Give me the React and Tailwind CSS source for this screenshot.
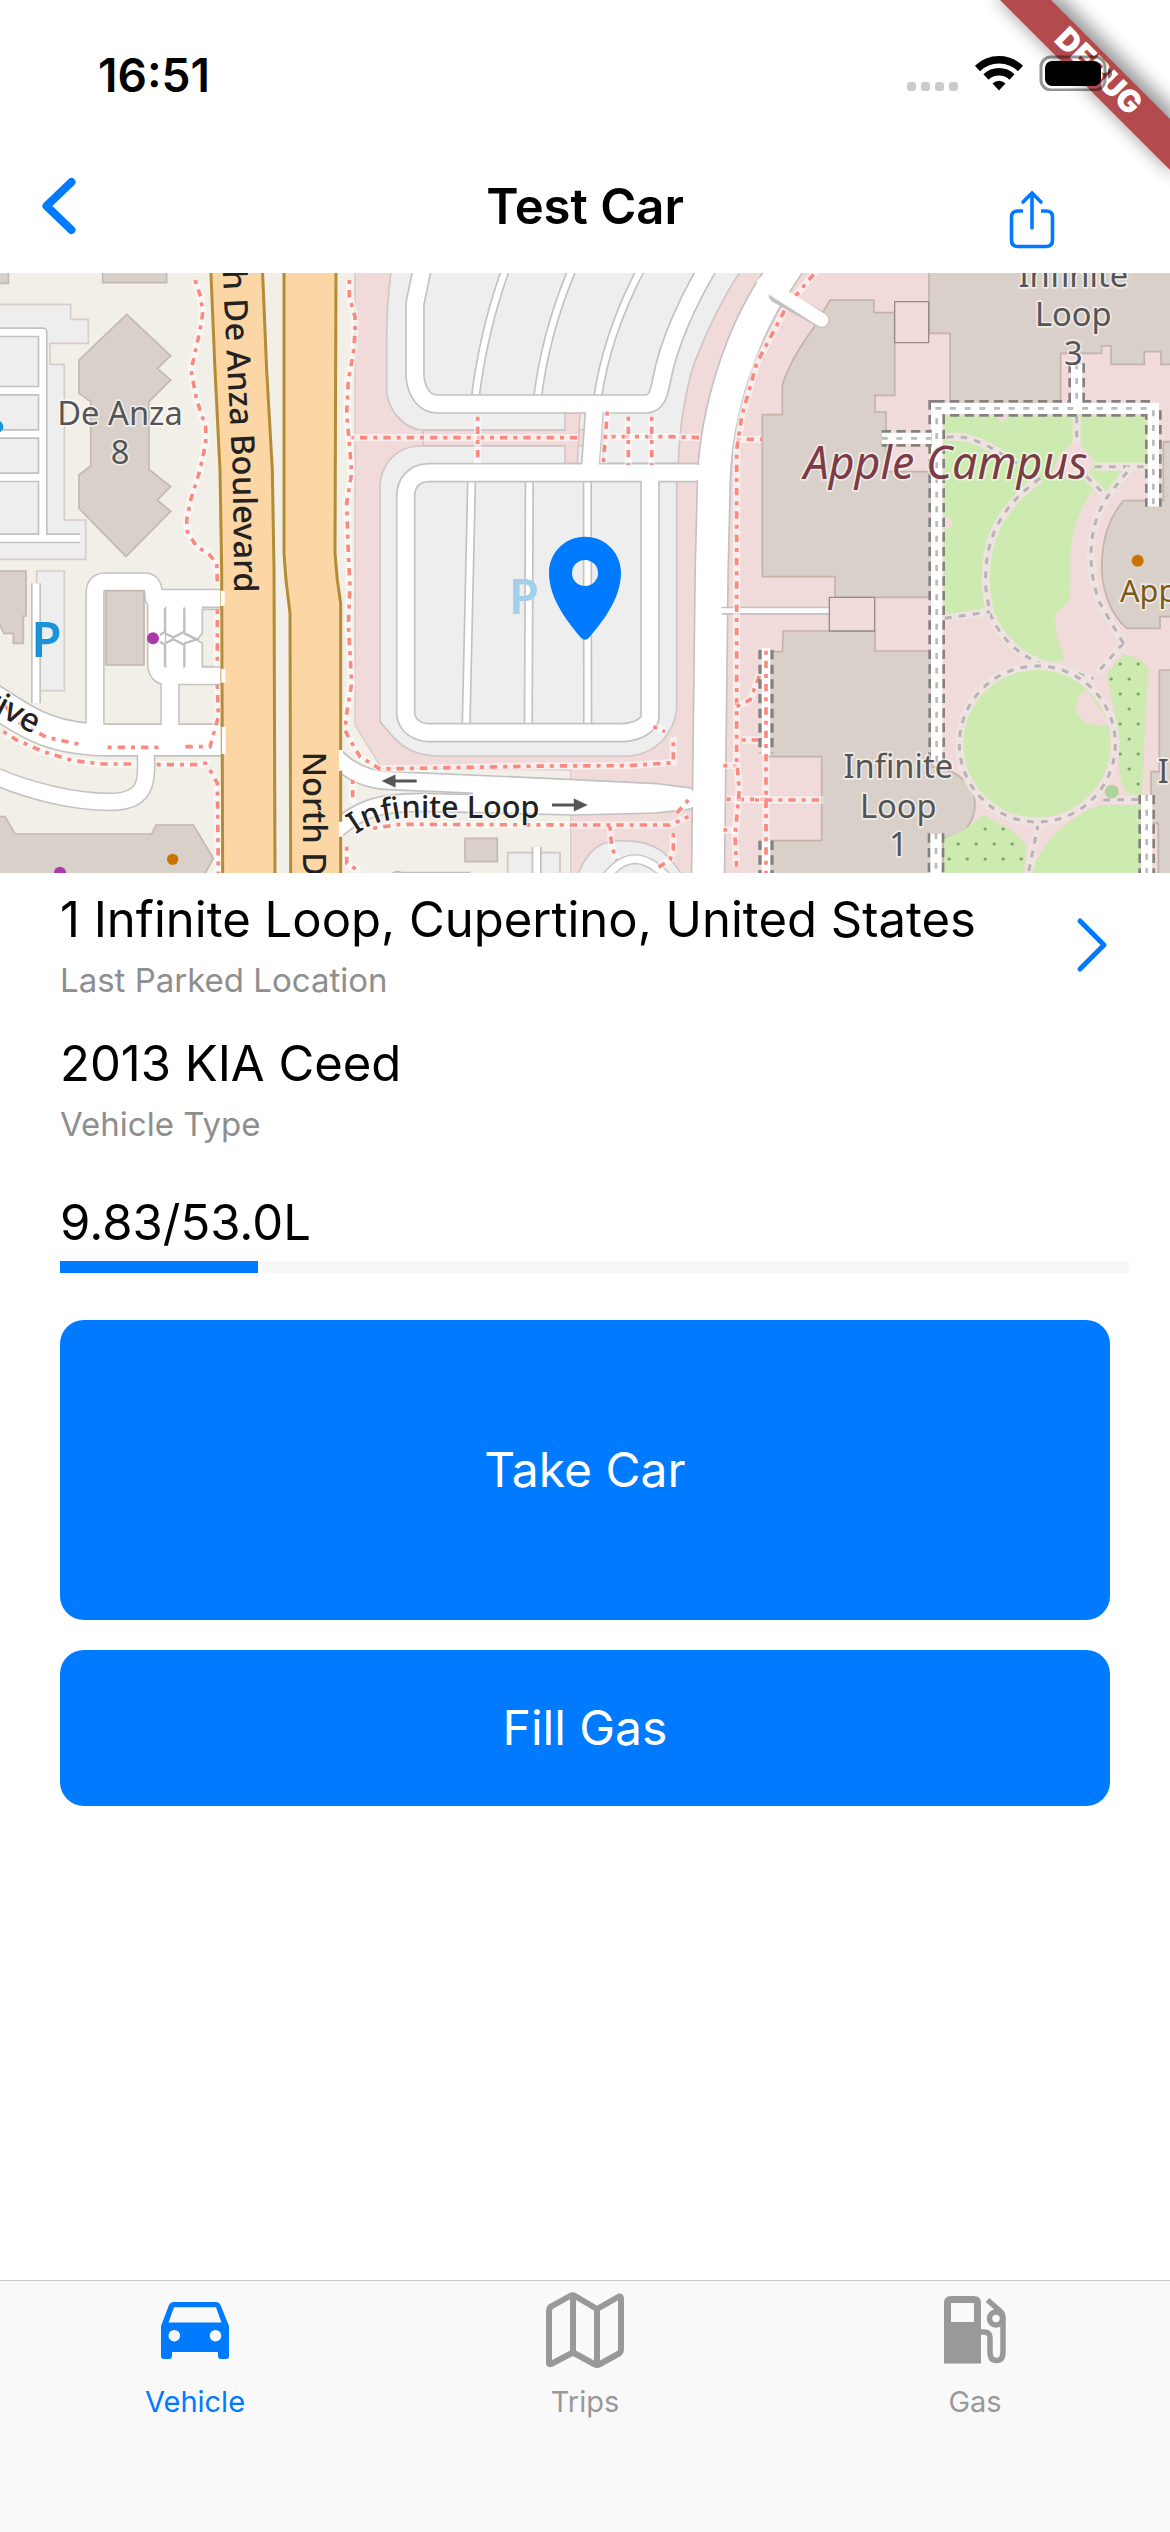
import React from "react";

const FUEL = 9.83;
const TANK = 53;

function DebugBanner() {
  return (
    <svg
      className="pointer-events-none absolute top-0 right-0 h-[220px] w-[220px]"
      viewBox="0 0 220 220"
      aria-hidden="true"
    >
      <defs>
        <filter id="bannerShadow" x="-20%" y="-20%" width="140%" height="140%">
          <feGaussianBlur stdDeviation="9" />
        </filter>
      </defs>
      <path
        d="M44 -6L226 176V112L108 -6Z"
        fill="#000"
        opacity="0.4"
        filter="url(#bannerShadow)"
      />
      <path d="M50 0L220 170V119L101 0Z" fill="#b34a4e" />
      <text
        transform="translate(149 71) rotate(45)"
        y="11"
        textAnchor="middle"
        fill="#fff"
        fontFamily="Inter, sans-serif"
        fontSize="31"
        fontWeight="900"
      >
        DEBUG
      </text>
    </svg>
  );
}

function StatusBar() {
  return (
    <div className="relative z-10 flex h-[141px] items-start justify-between pt-[45px] pr-[58px] pl-[98px]">
      <span className="text-[46px] leading-[60px] font-semibold">16:51</span>
      <svg className="mt-[10px] h-9 w-[206px]" viewBox="0 0 206 36" aria-hidden="true">
        <g fill="#cbcbcb">
          <rect x="1" y="27" width="9" height="9" rx="3" />
          <rect x="15" y="27" width="9" height="9" rx="3" />
          <rect x="29" y="27" width="9" height="9" rx="3" />
          <rect x="43" y="27" width="9" height="9" rx="3" />
        </g>
        <g fill="none" stroke="#000" strokeWidth="7.5">
          <path d="M71.500 13.500A31 31 0 0 1 114.500 13.500" />
          <path d="M80 22A19 19 0 0 1 106 22" />
        </g>
        <path d="M86.500 28.500Q93 23 99.500 28.500L93 35.500Z" />
        <rect x="135" y="2" width="64" height="33" rx="10" fill="none" stroke="#000" strokeOpacity="0.42" strokeWidth="3" />
        <rect x="139" y="6" width="56" height="25" rx="7" />
        <path d="M202 13Q206 15 206 18.500T202 24Z" opacity="0.5" />
      </svg>
    </div>
  );
}

function NavBar() {
  return (
    <header className="grid h-[132px] grid-cols-3 items-start">
      <button type="button" aria-label="Back" className="mt-9 ml-[41px] w-9 text-[#007aff]">
        <svg className="h-[58px] w-9" viewBox="0 0 36 58" aria-hidden="true">
          <path d="M30.500 5L5.500 29L30.500 53" fill="none" stroke="currentColor" strokeWidth="8" strokeLinecap="round" strokeLinejoin="round" />
        </svg>
      </button>
      <h1 className="mt-9 text-center text-[49px] leading-[60px] font-semibold">Test Car</h1>
      <button type="button" aria-label="Share" className="mt-[49px] mr-[114px] justify-self-end text-[#007aff]">
        <svg className="h-[60px] w-12" viewBox="0 0 48 60" fill="none" stroke="currentColor" strokeWidth="3.600" strokeLinecap="round" aria-hidden="true">
          <path d="M15 21H10Q3.500 21 3.500 27V50Q3.500 56.500 10 56.500H38Q44.500 56.500 44.500 50V27Q44.500 21 38 21H33" strokeLinecap="butt" />
          <path d="M24 4V38M15 12L24 3L33 12" />
        </svg>
      </button>
    </header>
  );
}

// Footpath in the red dotted style of the street map
function Footpath({ d }) {
  return (
    <>
      <path d={d} fill="none" stroke="#fff" strokeOpacity="0.5" strokeWidth="22" />
      <path d={d} fill="none" stroke="#fa8a80" strokeWidth="11" strokeDasharray="12 18 22 18" />
    </>
  );
}

function Walkway({ d }) {
  return (
    <>
      <path d={d} fill="none" stroke="#efe3e1" strokeWidth="24" />
      <path d={d} fill="none" stroke="#b8b3b4" strokeWidth="9" strokeDasharray="20 22" />
    </>
  );
}

function Corridor({ d }) {
  return (
    <>
      <path d={d} fill="none" stroke="#85817f" strokeWidth="50" strokeDasharray="28 16" />
      <path d={d} fill="none" stroke="#fff" strokeWidth="34" />
      <path d={d} fill="none" stroke="#bbb" strokeWidth="8" strokeDasharray="18 26" />
    </>
  );
}

function Roads({ paths, width, casing = 5 }) {
  return (
    <g fill="none" strokeLinecap="butt" strokeLinejoin="round">
      {paths.map((d) => (
        <path key={d} d={d} stroke="#c4c2c1" strokeWidth={width + casing * 2} />
      ))}
      {paths.map((d) => (
        <path key={d} d={d} stroke="#fff" strokeWidth={width} />
      ))}
    </g>
  );
}

function WestBlocks() {
  return (
    <g>
      <g fill="#d9d0c9" stroke="#c4b8b0" strokeWidth="5">
        <path d="M-10 -10H25V40H-10Z" />
        <path d="M308 -10H500V38H308Z" />
        <path d="M380 133L512 257L472 295L512 330L447 395V598L512 650L472 690L512 724L378 860L237 715V615L272 588V395L237 370V270Z" />
        <path d="M-10 903H78V1038H70V1120H40V1090H12L0 1065H-10Z" />
        <path d="M-10 1640H15L45 1692H455L468 1665H580L640 1765L610 1820H-10Z" />
      </g>
      <g fill="#eeeeee" stroke="#d8cccb" strokeWidth="5">
        <path d="M-10 103H212V148H265V220H150V283H193V750H257V868H-10Z" />
        <path d="M110 903H193V1262H110Z" />
      </g>
      <Roads
        width={20}
        paths={["M-10 187H128V805", "M-10 362H128", "M-10 492H128", "M-10 622H128", "M-10 805H240", "M108 940V1300"]}
      />
      <g fill="none" strokeLinejoin="round">
        <g stroke="#c4c2c1">
          <path d="M285 1400V970Q285 936 315 936H440Q462 940 462 985H680" strokeWidth="58" />
          <path d="M470 985V1180Q470 1217 500 1217H680M510 1217V1400" strokeWidth="58" />
          <path d="M-30 1285C60 1340 130 1410 330 1410H680" strokeWidth="100" />
          <path d="M-10 1520C80 1560 230 1600 350 1595C420 1590 438 1550 438 1500V1440" strokeWidth="56" />
        </g>
        <g stroke="#fff">
          <path d="M285 1400V970Q285 936 315 936H440Q462 940 462 985H680" strokeWidth="49" />
          <path d="M470 985V1180Q470 1217 500 1217H680M510 1217V1400" strokeWidth="49" />
          <path d="M-30 1285C60 1340 130 1410 330 1410H680" strokeWidth="90" />
          <path d="M-10 1520C80 1560 230 1600 350 1595C420 1590 438 1550 438 1500V1440" strokeWidth="47" />
          <path d="M525 985V1217M580 985V1217" strokeWidth="52" />
        </g>
      </g>
      <path d="M607 1018H670V1190H607V1120L590 1110L607 1090Z" fill="#f2efe9" stroke="#c4c2c1" strokeWidth="5" />
      <path d="M495 1015V1085L480 1095M495 1192V1125L480 1115M553 1015V1085L520 1102L495 1090M553 1192V1125L520 1108L495 1120M553 1090L590 1108L553 1120" fill="none" stroke="#c0bebd" strokeWidth="7" />
      <path d="M318 962H432V1185H318Z" fill="#d9d0c9" stroke="#c4b8b0" strokeWidth="5" />
      <Footpath d="M585 30L602 80L608 130L602 170L585 250L573 300L590 390L617 470V520L600 600L572 690L560 750L562 785L590 830L625 850L650 880L652 940" />
      <Footpath d="M652 1020V1190" />
      <Footpath d="M652 1245L655 1340L630 1430H540M475 1432H315M235 1422L140 1402L60 1360L0 1290" />
      <Footpath d="M10 1385L50 1410L130 1445L220 1472L310 1482H410M470 1484H600L632 1475M630 1500L652 1540L655 1810" />
      <circle cx="459" cy="1105" r="18" fill="#ac39ac" />
      <circle cx="180" cy="1808" r="18" fill="#ac39ac" />
      <circle cx="518" cy="1768" r="17" fill="#c77400" />
      <circle cx="-8" cy="470" r="18" fill="#1894d8" />
    </g>
  );
}

function Highways() {
  return (
    <g fill="#fcd6a4" stroke="#b38c35" strokeWidth="9">
      <path d="M822 -10H852V850L872 1030V1820H825Z" fill="#f2efe9" stroke="none" />
      <path d="M632 -10L645 300L660 600L665 900L668 1820H825L822 900L817 600L800 300L787 -10Z" />
      <path d="M852 -10V850L858 930L870 1030L872 1820H1022V1000L1012 930L1005 850L1008 -10Z" />
      <path d="M668 962V1008M670 1196V1238M671 1370V1452M1023 1440V1502M1023 1655V1700" stroke="#fff" strokeWidth="12" />
    </g>
  );
}

function ParkingLots() {
  return (
    <g transform="translate(1020 0)">
      <g fill="#eeeeee" stroke="#cfc6c5" strokeWidth="5">
        <path d="M155 -10Q140 100 140 200V370C150 430 200 480 250 480H790V580H1015C1020 430 1050 300 1075 250C1110 160 1150 80 1210 -10Z" />
        <path d="M120 640C130 560 190 528 240 528H790V620H1010V1320C1000 1390 950 1450 870 1458H290C190 1455 160 1400 120 1355Z" />
        <path d="M715 1810C760 1700 820 1710 890 1715C960 1725 990 1760 1030 1820H715Z" />
        <path d="M503 1748H660V1820H503Z" />
      </g>
      <path d="M675 430H720L712 580H675V527H250V481H675Z" fill="#f0dada" stroke="#cfc0c0" strokeWidth="4" />
      <path d="M375 1705H472V1775H375Z" fill="#d9d0c9" stroke="#c4b8b0" strokeWidth="5" />
      <path d="M155 1812Q170 1800 185 1808H390" fill="none" stroke="#c0bebd" strokeWidth="5" />
      <Roads
        width={18}
        paths={[
          "M500 -10Q430 180 405 390",
          "M700 -10Q615 190 592 390",
          "M907 -10Q800 190 772 390",
          "M395 620L378 1380",
          "M568 620L565 1380",
          "M742 620L743 1380",
        ]}
      />
      <Roads width={20} paths={["M590 1730V1820"]} />
      <Roads
        width={49}
        paths={[
          "M248 -10L225 100V320C230 370 255 400 290 402H920C950 400 957 370 965 330C985 220 1045 90 1105 -10",
          "M1085 608H265C220 610 197 640 197 680V1330C200 1370 235 1388 270 1388H850C900 1385 930 1360 930 1340V608",
          "M765 402L750 608",
          "M-20 1455Q50 1530 150 1532L620 1552L950 1568L1080 1585",
          "M-30 1695C60 1610 120 1598 250 1597L700 1608L950 1602L1080 1587",
        ]}
      />
      <path d="M800 1820Q880 1715 980 1820" fill="none" stroke="#c4c2c1" strokeWidth="30" />
      <path d="M800 1820Q880 1715 980 1820" fill="none" stroke="#fff" strokeWidth="22" />
      <Roads width={94} paths={["M1400 -100L1320 20C1200 190 1130 430 1122 620L1115 900L1104 1820"]} />
      <path d="M400 1585L620 1580L900 1588L1070 1588" stroke="#fff" strokeWidth="40" fill="none" />
      <path d="M1020 608H1100M1040 1587H1110" stroke="#fff" strokeWidth="46" />
      <path d="M1145 1022H1470" stroke="#c4c2c1" strokeWidth="24" />
      <path d="M1110 1022H1470" stroke="#fff" strokeWidth="14" />
      <g stroke="#555" strokeWidth="9" fill="#555">
        <path d="M230 1533H160" />
        <path d="M126 1533L166 1514V1552Z" strokeWidth="1" />
        <path d="M636 1605H705" />
        <path d="M742 1605L702 1586V1624Z" strokeWidth="1" />
      </g>
      <Footpath d="M30 503H715M815 500H990L1080 503M1190 508H1290" />
      <Footpath d="M413 440V580M865 440V585M935 440V585M802 425L790 580" />
      <Footpath d="M28 30V80L45 140V190L40 250L25 330L20 430L28 520L35 610L20 700L25 850L30 950L25 1060L35 1240L20 1330L15 1380L30 1410L60 1460L120 1497L390 1492L620 1488L860 1487L1000 1478V1400M940 1370L975 1385M1045 1590L1010 1630" />
      <Footpath d="M100 1675L180 1663L700 1665H990L1045 1640M810 1670L815 1730L830 1770M1000 1690V1740L990 1770L950 1795M1150 1487H1190M1160 1588H1290M1150 1680H1190M20 1730V1780L60 1805M38 1530V1600" />
      <Footpath d="M1440 -10L1340 110L1250 280L1205 440L1190 540V1470L1198 1560L1185 1700L1190 1790" />
      <Footpath d="M1190 1310L1230 1290L1265 1200M1205 1410H1260" />
    </g>
  );
}

function Campus() {
  return (
    <g transform="translate(2250 0)">
      <g fill="#d9d0c9" stroke="#c4b3a8" strokeWidth="5">
        <path d="M240 90H372V128H434V376H375V426H408V605H545V982H255V920H37V434H97V345Q120 270 190 175Z" />
        <path d="M100 1083H375V1143H545V1490C640 1500 675 1560 675 1600C675 1660 640 1700 580 1705V1820H50V1712H215V1460H50V1145H97Z" />
        <path d="M537 -10V190H600V400H932V250H1055V228H1083V283H1183V245H1233V283H1270V-10Z" />
        <path d="M1270 515H1240V692H1120C1080 740 1055 800 1055 900C1060 980 1090 1040 1130 1075H1230V1040H1270Z" />
        <path d="M1270 1200H1228V1505H1203V1660H1225V1820H1270Z" />
      </g>
      <path d="M238 982H374V1083H238ZM434 95H536V218H434Z" fill="#f0dada" stroke="#958a88" strokeWidth="4" />
      <g fill="#cdebb0">
        <path d="M583 437H1190V600H1140L1075 685L1025 660C960 780 960 800 960 995C900 1030 905 1060 945 1172H870C790 1130 740 1080 715 1025L583 1040Z" />
        <circle cx="860" cy="1420" r="222" />
        <path d="M1120 1153C1160 1160 1190 1180 1195 1200L1175 1580H1150C1110 1560 1100 1500 1110 1420C1100 1330 1075 1250 1070 1210Z" />
        <path d="M700 1635C760 1670 800 1680 830 1730L820 1820H583V1705C640 1690 680 1650 700 1635Z" />
        <path d="M1050 1605H1180V1820H845C860 1740 930 1650 1050 1605Z" />
      </g>
      <g fill="#f0dada">
        <path d="M925 560L980 510L1035 575L1010 625H900Z" />
        <path d="M1082 1365H1030C960 1350 970 1280 1010 1258Z" />
        <circle cx="590" cy="758" r="18" />
        <path d="M735 437H775L755 460Z" />
      </g>
      <path d="M1110 1182h1m53 0h1M1083 1227h1m53 0h1M1110 1272h1m53 0h1M1137 1317h1M1110 1362h1m53 0h1M1137 1407h1M1110 1452h1m53 0h1M1137 1497h1M1164 1542h1M705 1677h1m53 0h1M624 1722h1m53 0h1m53 0h1m53 0h1M597 1767h1m53 0h1m53 0h1m53 0h1m53 0h1" stroke="#78a565" strokeWidth="9" strokeLinecap="round" />
      <Walkway d="M590 502C660 490 720 530 800 580M980 440V520M1035 590H1190" />
      <Walkway d="M870 625C740 720 700 820 708 960L720 1030C760 1130 850 1185 930 1195L1030 1225" />
      <Walkway d="M585 1045L720 1025M1120 1120L1040 1210M1060 1590L1175 1588M865 1660L835 1810" />
      <Walkway d="M1120 1120L1050 1000C1010 900 1010 760 1080 670L1140 595M1010 620L1075 685" />
      <circle cx="862" cy="1422" r="234" fill="none" stroke="#efe3e1" strokeWidth="24" />
      <circle cx="862" cy="1422" r="234" fill="none" stroke="#b8b3b4" strokeWidth="9" strokeDasharray="20 22" />
      <circle cx="1085" cy="1565" r="21" fill="#aed49b" />
      <Corridor d="M560 1475V415H1210V710" />
      <Corridor d="M980 280V400" />
      <Corridor d="M395 505H545" />
      <Corridor d="M558 1690V1820" />
      <Corridor d="M1190 1575V1820" />
      <path d="M48 1140V1450M48 1712V1820" fill="none" stroke="#85817f" strokeWidth="46" strokeDasharray="28 16" />
      <path d="M48 1135V1455M48 1710V1820" fill="none" stroke="#fff" strokeWidth="26" />
      <Footpath d="M48 1142V1820M15 1590H220" />
      <path d="M80 75L215 150" stroke="#c4c2c1" strokeWidth="48" strokeLinecap="round" />
      <path d="M40 40L215 150" stroke="#fff" strokeWidth="40" strokeLinecap="round" />
      <circle cx="1163" cy="872" r="18" fill="#c77400" />
    </g>
  );
}

function MapLabels() {
  return (
    <g fontFamily='"Noto Sans", "Open Sans", sans-serif' fontSize="98" fill="#555" stroke="#fff" strokeOpacity="0.6" strokeWidth="10" paintOrder="stroke" strokeLinejoin="round">
      <defs>
        <path id="deAnzaLine" d="M660 -400L668 0L684 330L698 600L703 968" />
        <path id="northLine" d="M908 1445V1805" />
        <path id="loopLine" d="M1068 1694Q1130 1645 1240 1643H1700" />
      </defs>
      <g textAnchor="middle">
        <text x="360" y="465">De Anza</text>
        <text x="360" y="582">8</text>
        <text x="3220" y="50">Infinite</text>
        <text x="3220" y="168">Loop</text>
        <text x="3220" y="285">3</text>
        <text x="2695" y="1525">Infinite</text>
        <text x="2695" y="1643">Loop</text>
        <text x="2695" y="1757">1</text>
      </g>
      <text x="3473" y="1540">I</text>
      <text x="3360" y="995" fontSize="92" fill="#7d5a14">App</text>
      <text x="2411" y="628" fontSize="134" fontStyle="italic" fill="#7d3c44">Apple Campus</text>
      <g fill="#222" fontWeight="500">
        <text textAnchor="end" stroke="none">
          <textPath href="#deAnzaLine" startOffset="100%">h De Anza Boulevard</textPath>
        </text>
        <text stroke="none">
          <textPath href="#northLine">North D</textPath>
        </text>
        <text fontSize="92">
          <textPath href="#loopLine">Infinite Loop</textPath>
        </text>
        <text x="100" y="1392" textAnchor="end" transform="rotate(28 100 1392)">Drive</text>
      </g>
      <g fontSize="148" stroke="none" fontWeight="600">
        <text x="94" y="1160" fill="#1a93d8">P</text>
        <text x="1526" y="1031" fill="#a3d0e8">P</text>
      </g>
    </g>
  );
}

function ParkedMap() {
  return (
    <svg className="block aspect-[1170/600] w-full" viewBox="0 9 3510 1800" role="img" aria-label="Parked location">
      <rect width="3510" height="1820" fill="#f2efe9" />
      <path d="M1065 -10V1365L1145 1495L1712 1500V1820H3520V-10Z" fill="#f0dada" stroke="#d9c8c8" strokeWidth="4" />
      <WestBlocks />
      <ParkingLots />
      <Highways />
      <Campus />
      <MapLabels />
      <path
        transform="translate(1755 800)"
        fill="#007aff"
        fillRule="evenodd"
        d="M0 0C60 0 108 48 108 108C108 190 46 262 12 303Q0 315 -12 303C-46 262 -108 190 -108 108C-108 48 -60 0 0 0ZM0 70A39 39 0 1 0 0 148A39 39 0 1 0 0 70Z"
      />
    </svg>
  );
}

function Detail({ value, label }) {
  return (
    <span className="block text-left">
      <span className="block text-[49px] leading-[60px] text-black">{value}</span>
      <span className="block text-[33px] leading-[60px] text-[#8e8e8e]">{label}</span>
    </span>
  );
}

function CarIcon() {
  return (
    <svg className="h-[57px] w-[68px]" viewBox="0 0 68 57" fill="currentColor" fillRule="evenodd" aria-hidden="true">
      <path d="M13 0H55Q58 0 59.500 3L68 24V54Q68 57 65 57H60Q57 57 57 54V50H11V54Q11 57 8 57H3Q0 57 0 54V24L8 3Q9.500 0 13 0ZM13 5.300L7.500 20.500H60.500L55 5.300ZM13.300 27.900A5.800 5.800 0 1 0 13.300 39.500A5.800 5.800 0 1 0 13.300 27.900ZM54.500 27.900A5.800 5.800 0 1 0 54.500 39.500A5.800 5.800 0 1 0 54.500 27.900Z" />
    </svg>
  );
}

function TripsIcon() {
  return (
    <svg className="h-[76px] w-[78px]" viewBox="0 0 78 76" fill="none" stroke="currentColor" strokeWidth="6" strokeLinejoin="round" aria-hidden="true">
      <path d="M3 71V19Q3 15.500 6 14L24 4Q26.500 2.500 29 4L51 17L73 4.500Q75 4 75 6.500V57Q75 60 73 61.500L54 72Q51 74 48 72L27 60.500L6 71.500Q3 73 3 71ZM27 4V60M51 17V72" />
    </svg>
  );
}

function GasIcon() {
  return (
    <svg className="h-[68px] w-[62px]" viewBox="0 0 62 68" fill="none" stroke="currentColor" strokeWidth="5.500" aria-hidden="true">
      <path fill="currentColor" stroke="none" fillRule="evenodd" d="M7 0H30Q37 0 37 7V67.500H0V7Q0 0 7 0ZM7 7V26H30V7Z" />
      <path d="M36 36H40Q46 36 46 42V56Q46 64.500 52.500 64.500Q59 64.500 59 56V21Q59 18 57 16L43.500 4" />
      <circle cx="52" cy="22.500" r="6.500" />
    </svg>
  );
}

const tabs = [
  { id: "vehicle", label: "Vehicle", Icon: CarIcon, active: true },
  { id: "trips", label: "Trips", Icon: TripsIcon },
  { id: "gas", label: "Gas", Icon: GasIcon },
];

function TabBar() {
  return (
    <nav className="mt-auto flex border-t border-[#c8cac9] bg-[#f9f9f9] pt-[11px] pb-[110px]">
      {tabs.map(({ id, label, Icon, active }) => (
        <a
          key={id}
          href={`#${id}`}
          aria-current={active ? "page" : undefined}
          className={`flex flex-1 flex-col items-center ${active ? "text-[#007aff]" : "text-[#999999]"}`}
        >
          <span className="flex h-[76px] items-center">
            <Icon />
          </span>
          <span className="mt-[14px] text-[29px] leading-[40px]">{label}</span>
        </a>
      ))}
    </nav>
  );
}

export default function App() {
  return (
    <div className="relative flex min-h-screen flex-col overflow-hidden bg-white font-[Inter,'Liberation_Sans',sans-serif] text-black">
      <DebugBanner />
      <StatusBar />
      <NavBar />
      <ParkedMap />

      <main className="flex flex-col pt-[17px] pl-[60px]">
        <button type="button" className="flex items-start justify-between pr-[62px]">
          <Detail value="1 Infinite Loop, Cupertino, United States" label="Last Parked Location" />
          <svg className="mt-[27px] h-14 w-8 text-[#007aff]" viewBox="0 0 32 56" aria-hidden="true">
            <path d="M4 4L28 28L4 52" fill="none" stroke="currentColor" strokeWidth="5" strokeLinecap="round" strokeLinejoin="round" />
          </svg>
        </button>
        <div className="mt-6">
          <Detail value="2013 KIA Ceed" label="Vehicle Type" />
        </div>

        <p className="mt-[39px] text-[49px] leading-[60px]">9.83/53.0L</p>
        <div
          role="progressbar"
          aria-label="Fuel level"
          aria-valuenow={FUEL}
          aria-valuemin={0}
          aria-valuemax={TANK}
          className="mt-2 mr-[41px] h-3 bg-[#f8f8f8]"
        >
          <div className="h-full bg-[#007aff]" style={{ width: `${(FUEL / TANK) * 100}%` }} />
        </div>

        <div className="mt-[47px] mr-[60px] flex flex-col gap-[30px] text-[48px] text-white">
          <button type="button" className="h-[300px] rounded-3xl bg-[#007aff]">
            Take Car
          </button>
          <button type="button" className="h-[156px] rounded-3xl bg-[#007aff]">
            Fill Gas
          </button>
        </div>
      </main>

      <TabBar />
    </div>
  );
}
